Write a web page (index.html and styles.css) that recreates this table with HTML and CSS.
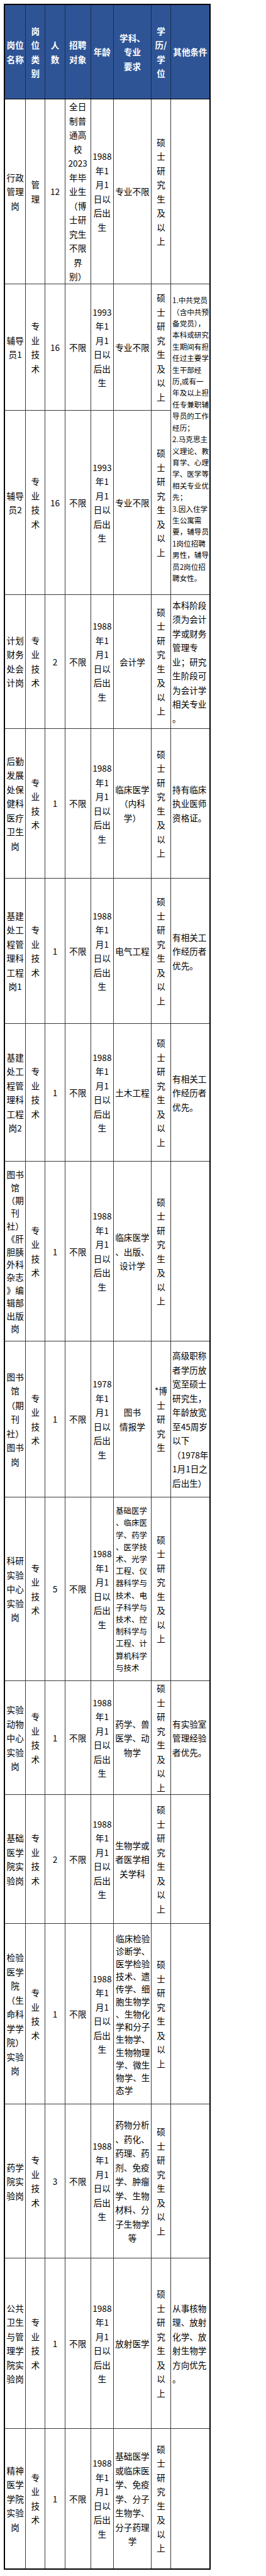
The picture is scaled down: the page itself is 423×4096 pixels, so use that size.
FILE: index.html
```html
<!DOCTYPE html>
<html lang="zh-CN">
<head>
<meta charset="utf-8">
<title>招聘岗位表</title>
<link rel="stylesheet" href="styles.css">
</head>
<body>
<table class="sheet">
  <colgroup>
    <col class="c-name"><col class="c-type"><col class="c-num"><col class="c-target">
    <col class="c-age"><col class="c-major"><col class="c-degree"><col class="c-other">
  </colgroup>
  <thead>
    <tr class="h-head">
      <th>岗位<br>名称</th>
      <th>岗<br>位<br>类<br>别</th>
      <th>人<br>数</th>
      <th>招聘<br>对象</th>
      <th>年龄</th>
      <th>学科、<br>专业<br>要求</th>
      <th>学<br>历/<br>学<br>位</th>
      <th>其他条件</th>
    </tr>
  </thead>
  <tbody>
    <tr class="h1">
      <td>行政<br>管理<br>岗</td>
      <td>管<br>理</td>
      <td>12</td>
      <td>全日<br>制普<br>通高<br>校<br>2023<br>年毕<br>业生<br>（博<br>士研<br>究生<br>不限<br>界<br>别）</td>
      <td>1988<br>年1<br>月1<br>日以<br>后出<br>生</td>
      <td>专业不限</td>
      <td>硕<br>士<br>研<br>究<br>生<br>及<br>以<br>上</td>
      <td></td>
    </tr>
    <tr class="h2">
      <td>辅导<br>员1</td>
      <td>专<br>业<br>技<br>术</td>
      <td>16</td>
      <td>不限</td>
      <td>1993<br>年1<br>月1<br>日以<br>后出<br>生</td>
      <td>专业不限</td>
      <td>硕<br>士<br>研<br>究<br>生<br>及<br>以<br>上</td>
      <td class="left small" rowspan="2">1.中共党员<br>（含中共预<br>备党员），<br>本科或研究<br>生期间有担<br>任过主要学<br>生干部经<br>历,或有一<br>年及以上担<br>任专兼职辅<br>导员的工作<br>经历；<br>2.马克思主<br>义理论、教<br>育学、心理<br>学、医学等<br>相关专业优<br>先；<br>3.因入住学<br>生公寓需<br>要，辅导员<br>1岗位招聘<br>男性，辅导<br>员2岗位招<br>聘女性。</td>
    </tr>
    <tr class="h3">
      <td>辅导<br>员2</td>
      <td>专<br>业<br>技<br>术</td>
      <td>16</td>
      <td>不限</td>
      <td>1993<br>年1<br>月1<br>日以<br>后出<br>生</td>
      <td>专业不限</td>
      <td>硕<br>士<br>研<br>究<br>生<br>及<br>以<br>上</td>
    </tr>
    <tr class="h4">
      <td>计划<br>财务<br>处会<br>计岗</td>
      <td>专<br>业<br>技<br>术</td>
      <td>2</td>
      <td>不限</td>
      <td>1988<br>年1<br>月1<br>日以<br>后出<br>生</td>
      <td>会计学</td>
      <td>硕<br>士<br>研<br>究<br>生<br>及<br>以<br>上</td>
      <td class="left">本科阶段<br>须为会计<br>学或财务<br>管理专<br>业；研究<br>生阶段可<br>为会计学<br>相关专业<br>。</td>
    </tr>
    <tr class="h5">
      <td>后勤<br>发展<br>处保<br>健科<br>医疗<br>卫生<br>岗</td>
      <td>专<br>业<br>技<br>术</td>
      <td>1</td>
      <td>不限</td>
      <td>1988<br>年1<br>月1<br>日以<br>后出<br>生</td>
      <td>临床医学<br>（内科<br>学）</td>
      <td>硕<br>士<br>研<br>究<br>生<br>及<br>以<br>上</td>
      <td class="left">持有临床<br>执业医师<br>资格证。</td>
    </tr>
    <tr class="h6">
      <td>基建<br>处工<br>程管<br>理科<br>工程<br>岗1</td>
      <td>专<br>业<br>技<br>术</td>
      <td>1</td>
      <td>不限</td>
      <td>1988<br>年1<br>月1<br>日以<br>后出<br>生</td>
      <td>电气工程</td>
      <td>硕<br>士<br>研<br>究<br>生<br>及<br>以<br>上</td>
      <td class="left">有相关工<br>作经历者<br>优先。</td>
    </tr>
    <tr class="h7">
      <td>基建<br>处工<br>程管<br>理科<br>工程<br>岗2</td>
      <td>专<br>业<br>技<br>术</td>
      <td>1</td>
      <td>不限</td>
      <td>1988<br>年1<br>月1<br>日以<br>后出<br>生</td>
      <td>土木工程</td>
      <td>硕<br>士<br>研<br>究<br>生<br>及<br>以<br>上</td>
      <td class="left">有相关工<br>作经历者<br>优先。</td>
    </tr>
    <tr class="h8">
      <td class="tight">图书<br>馆<br>（期<br>刊<br>社）<br>《肝<br>胆胰<br>外科<br>杂志<br>》编<br>辑部<br>出版<br>岗</td>
      <td>专<br>业<br>技<br>术</td>
      <td>1</td>
      <td>不限</td>
      <td>1988<br>年1<br>月1<br>日以<br>后出<br>生</td>
      <td>临床医学<br>、出版、<br>设计学</td>
      <td>硕<br>士<br>研<br>究<br>生<br>及<br>以<br>上</td>
      <td></td>
    </tr>
    <tr class="h9">
      <td>图书<br>馆<br>（期<br>刊<br>社）<br>图书<br>岗</td>
      <td>专<br>业<br>技<br>术</td>
      <td>1</td>
      <td>不限</td>
      <td>1978<br>年1<br>月1<br>日以<br>后出<br>生</td>
      <td>图书<br>情报学</td>
      <td>*博<br>士<br>研<br>究<br>生</td>
      <td class="left">高级职称<br>者学历放<br>宽至硕士<br>研究生，<br>年龄放宽<br>至45周岁<br>以下<br>（1978年<br>1月1日之<br>后出生）</td>
    </tr>
    <tr class="h10">
      <td>科研<br>实验<br>中心<br>实验<br>岗</td>
      <td>专<br>业<br>技<br>术</td>
      <td>5</td>
      <td>不限</td>
      <td>1988<br>年1<br>月1<br>日以<br>后出<br>生</td>
      <td class="left shrink">基础医学<br>、临床医<br>学、药学<br>、医学技<br>术、光学<br>工程、仪<br>器科学与<br>技术、电<br>子科学与<br>技术、控<br>制科学与<br>工程、计<br>算机科学<br>与技术</td>
      <td>硕<br>士<br>研<br>究<br>生<br>及<br>以<br>上</td>
      <td></td>
    </tr>
    <tr class="h11">
      <td>实验<br>动物<br>中心<br>实验<br>岗</td>
      <td>专<br>业<br>技<br>术</td>
      <td>1</td>
      <td>不限</td>
      <td>1988<br>年1<br>月1<br>日以<br>后出<br>生</td>
      <td>药学、兽<br>医学、动<br>物学</td>
      <td>硕<br>士<br>研<br>究<br>生<br>及<br>以<br>上</td>
      <td class="left">有实验室<br>管理经验<br>者优先。</td>
    </tr>
    <tr class="h12">
      <td>基础<br>医学<br>院实<br>验岗</td>
      <td>专<br>业<br>技<br>术</td>
      <td>2</td>
      <td>不限</td>
      <td>1988<br>年1<br>月1<br>日以<br>后出<br>生</td>
      <td>生物学或<br>者医学相<br>关学科</td>
      <td>硕<br>士<br>研<br>究<br>生<br>及<br>以<br>上</td>
      <td></td>
    </tr>
    <tr class="h13">
      <td>检验<br>医学<br>院<br>（生<br>命科<br>学学<br>院）<br>实验<br>岗</td>
      <td>专<br>业<br>技<br>术</td>
      <td>1</td>
      <td>不限</td>
      <td>1988<br>年1<br>月1<br>日以<br>后出<br>生</td>
      <td class="left dense">临床检验<br>诊断学、<br>医学检验<br>技术、遗<br>传学、细<br>胞生物学<br>、生物化<br>学和分子<br>生物学、<br>生物物理<br>学、微生<br>物学、生<br>态学</td>
      <td>硕<br>士<br>研<br>究<br>生<br>及<br>以<br>上</td>
      <td></td>
    </tr>
    <tr class="h14">
      <td>药学<br>院实<br>验岗</td>
      <td>专<br>业<br>技<br>术</td>
      <td>3</td>
      <td>不限</td>
      <td>1988<br>年1<br>月1<br>日以<br>后出<br>生</td>
      <td>药物分析<br>、药化、<br>药理、药<br>剂、免疫<br>学、肿瘤<br>学、生物<br>材料、分<br>子生物学<br>等</td>
      <td>硕<br>士<br>研<br>究<br>生<br>及<br>以<br>上</td>
      <td></td>
    </tr>
    <tr class="h15">
      <td>公共<br>卫生<br>与管<br>理学<br>院实<br>验岗</td>
      <td>专<br>业<br>技<br>术</td>
      <td>1</td>
      <td>不限</td>
      <td>1988<br>年1<br>月1<br>日以<br>后出<br>生</td>
      <td>放射医学</td>
      <td>硕<br>士<br>研<br>究<br>生<br>及<br>以<br>上</td>
      <td class="left">从事核物<br>理、放射<br>化学、放<br>射生物学<br>方向优先<br>。</td>
    </tr>
    <tr class="h16">
      <td>精神<br>医学<br>学院<br>实验<br>岗</td>
      <td>专<br>业<br>技<br>术</td>
      <td>1</td>
      <td>不限</td>
      <td>1988<br>年1<br>月1<br>日以<br>后出<br>生</td>
      <td>基础医学<br>或临床医<br>学、免疫<br>学、分子<br>生物学、<br>分子药理<br>学</td>
      <td>硕<br>士<br>研<br>究<br>生<br>及<br>以<br>上</td>
      <td></td>
    </tr>
  </tbody>
</table>
</body>
</html>
```
FILE: styles.css
```css
html, body {
  margin: 0;
  padding: 0;
  background: #ffffff;
}

body {
  font-family: "Noto Sans CJK SC", "Noto Sans", sans-serif;
  color: #000;
}

.sheet {
  margin: 6px 0 0 6px;
  border-collapse: collapse;
  table-layout: fixed;
  width: 327px;
  border: 2px solid #000;
}

.c-name { width: 33.8px; }
.c-type { width: 31.2px; }
.c-num { width: 31.2px; }
.c-target { width: 41px; }
.c-age { width: 36.4px; }
.c-major { width: 59.8px; }
.c-degree { width: 31.2px; }
.c-other { width: 62.4px; }

.sheet th,
.sheet td {
  border: 1px solid #3a3a3a;
  padding: 0;
  text-align: center;
  vertical-align: middle;
  font-size: 13.6px;
  line-height: 22.5px;
  white-space: nowrap;
  overflow: visible;
}

.sheet th {
  background: #2e5496;
  color: #ffffff;
  font-weight: bold;
  border-color: #1a2b4d;
  border-bottom-color: #000;
}

.sheet td.left {
  text-align: left;
  padding-left: 2px;
}

.sheet td.small {
  font-size: 11.6px;
  line-height: 18.4px;
}

.sheet td.tight {
  line-height: 20.4px;
}

.sheet td.shrink {
  font-size: 12.5px;
  line-height: 19.2px;
  padding-left: 3px;
}

.sheet td.dense {
  line-height: 20.1px;
  padding-left: 3px;
}

.h-head { height: 150.8px; }
.h1 { height: 292.5px; }
.h2 { height: 201.5px; }
.h3 { height: 292.5px; }
.h4 { height: 213.2px; }
.h5 { height: 238.5px; }
.h6 { height: 230.8px; }
.h7 { height: 219px; }
.h8 { height: 286px; }
.h9 { height: 247.6px; }
.h10 { height: 292.5px; }
.h11 { height: 180.7px; }
.h12 { height: 204.8px; }
.h13 { height: 287.3px; }
.h14 { height: 245px; }
.h15 { height: 270.4px; }
.h16 { height: 223.6px; }
```
